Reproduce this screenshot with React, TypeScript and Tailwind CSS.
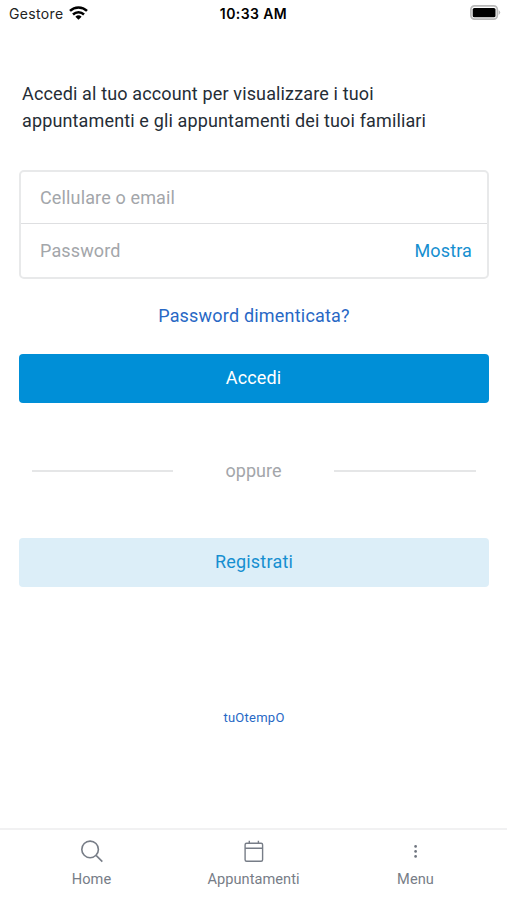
export default function App() {
  return (
    <div className="flex h-[900px] w-[507px] flex-col overflow-hidden bg-white font-['Roboto',sans-serif] text-[18px] tracking-[0.14px] text-[#252d36]">
      <header className="grid h-[27px] shrink-0 grid-cols-3 items-center pr-[6px] pl-[9px] font-['Inter',sans-serif] text-[14px] text-black">
        <div className="flex items-center gap-[5px] tracking-[0.35px]">
          <span className="text-[#222]">Gestore</span>
          <svg className="h-[14px] w-[19px] -translate-y-px" viewBox="0 0 19 14" fill="none" stroke="#000" strokeWidth="2.5">
            <path d="M1 4.9a12.2 12.2 0 0 1 17 0M4 8.5a8 8 0 0 1 11 0" />
            <path d="M6.4 10.7a4.6 4.6 0 0 1 6.2 0L9.5 13.8z" fill="#000" stroke="none" />
          </svg>
        </div>
        <span className="pr-[3px] text-center font-semibold tracking-[0.4px]">10:33 AM</span>
        <svg className="h-[15px] w-[31px] -translate-y-px justify-self-end" viewBox="0 0 31 15">
          <rect x="0.9" y="0.9" width="26.4" height="13.2" rx="3.6" fill="#fff" stroke="#b9b9b9" strokeWidth="1.7" />
          <rect x="2.7" y="2.9" width="22.8" height="9.4" rx="1.6" />
          <path d="M28.6 5q3.3 2.5 0 5z" fill="#b9b9b9" />
        </svg>
      </header>
      <main className="flex flex-1 flex-col pt-[53px] pr-[18px] pl-[19px]">
        <p className="pl-[3px] leading-[27px]">Accedi al tuo account per visualizzare i tuoi<br />appuntamenti e gli appuntamenti dei tuoi familiari</p>
        <form className="mt-[36px] h-[109px] shrink-0 rounded-[5px] border-2 border-[#e8e9ea]">
          <label className="flex h-[52px] items-center border-b-[1.5px] border-[#dedfe1] pl-[19px] text-[#a3a6aa]">Cellulare o email</label>
          <div className="flex h-[53px] items-center justify-between pr-[15px] pl-[19px]">
            <span className="text-[#a3a6aa]">Password</span>
            <button type="button" className="text-[#168fd0]">Mostra</button>
          </div>
        </form>
        <a className="mt-[23px] text-center leading-[27px] tracking-[0.2px] text-[#2868c5]">Password dimenticata?</a>
        <button className="mt-[25px] h-[49px] shrink-0 rounded-[4px] bg-[#008fd7] pr-px pb-[2px] text-white">Accedi</button>
        <div className="mt-[54px] flex h-[27px] items-center justify-between pr-[13px] pl-[13px] tracking-normal text-[#a3a6aa]">
          <span className="h-[2px] w-[141px] bg-[#e5e6e7]" />
          <span>oppure</span>
          <span className="h-[2px] w-[142px] bg-[#e5e6e7]" />
        </div>
        <button className="mt-[54px] h-[49px] shrink-0 rounded-[4px] bg-[#dceef8] pb-[2px] tracking-[0.2px] text-[#168fd0]">Registrati</button>
        <a className="mt-[121px] text-center text-[13px] leading-[20px] tracking-[0.25px] text-[#2868c5]">tuOtempO</a>
      </main>
      <nav className="grid h-[72px] shrink-0 grid-cols-[162px_162px_162px] justify-center border-t-2 border-[#f1f1f2] pt-[9px] text-[14.6px] tracking-[0.05px] text-[#777d87]">
        <div className="flex flex-col items-center gap-[4px]">
          <svg className="size-[26px]" viewBox="0 0 26 26" fill="none" stroke="#777d87" strokeWidth="1.6"><circle cx="11.1" cy="10.4" r="8.3" /><path d="m17.1 16.4 6.2 6.2" /></svg>
          <span>Home</span>
        </div>
        <div className="flex flex-col items-center gap-[4px]">
          <svg className="size-[26px]" viewBox="0 0 26 26" fill="none" stroke="#777d87" strokeWidth="1.4"><rect x="4.1" y="4.3" width="17.5" height="18" rx="1.5" /><path d="M4.1 9.3h17.5M8.3 1.8V4.3M17.4 1.8V4.3" /></svg>
          <span>Appuntamenti</span>
        </div>
        <div className="flex flex-col items-center gap-[4px]">
          <svg className="size-[26px]" viewBox="0 0 26 26" fill="#6f757f"><circle cx="12.6" cy="7.4" r="1.35" /><circle cx="12.6" cy="12.4" r="1.35" /><circle cx="12.6" cy="17.4" r="1.35" /></svg>
          <span>Menu</span>
        </div>
      </nav>
    </div>
  )
}
